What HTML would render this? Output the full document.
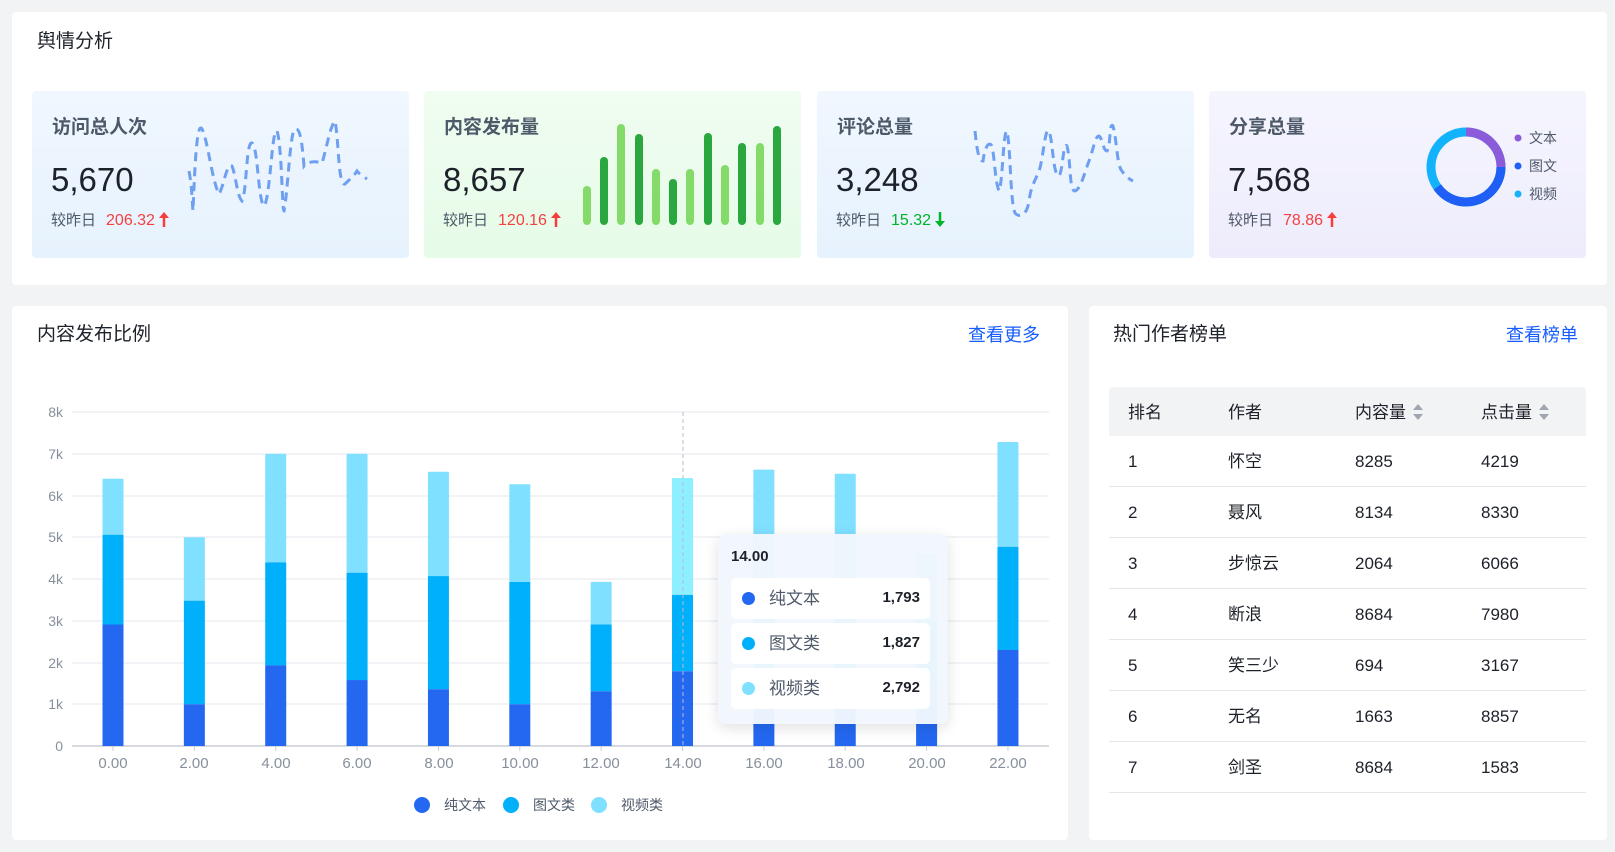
<!DOCTYPE html>
<html><head><meta charset="utf-8">
<style>
*{margin:0;padding:0;box-sizing:border-box}
body{width:1615px;height:852px;background:#f1f3f5;font-family:"Liberation Sans","Noto Sans CJK SC",sans-serif;position:relative;overflow:hidden;color:#1d2129}
.abs{position:absolute}
.panel{position:absolute;background:#fff;border-radius:4px}
.card{position:absolute;top:91px;width:377px;height:167px;border-radius:4px}
.ct{position:absolute;left:20px;top:25px;font-size:19px;line-height:24px;font-weight:bold;color:#4e5969}
.cn{position:absolute;left:19px;top:69px;font-size:33px;line-height:40px;color:#1d2129}
.cd{position:absolute;left:19px;top:120px;font-size:15px;line-height:20px;color:#4e5969;white-space:nowrap}
.cd b{font-weight:normal;margin-left:10px;font-size:16px}
.cd svg{vertical-align:-2px;margin-left:4px}
.up{color:#f53f3f}.dn{color:#00b42a}
.h{font-size:19px;line-height:24px;color:#1d2129}
.link{font-size:18px;line-height:24px;color:#165dff}
.row{position:absolute;left:1109px;width:477px;height:51px;border-bottom:1px solid #e5e6eb;font-size:17px}
.row span,.hd span{position:absolute;top:15px;line-height:22px;height:22px}
.tt span{line-height:22px}
</style></head><body>

<div class="panel" style="left:12px;top:12px;width:1595px;height:273px"></div>
<div class="abs h" style="left:37px;top:30px">舆情分析</div>

<div class="card" style="left:32px;background:linear-gradient(#f0f7ff,#e6f2fd)">
 <div class="ct">访问总人次</div><div class="cn">5,670</div>
 <div class="cd">较昨日<b class="up">206.32</b><svg width="10" height="15"><path d="M5,15V5" stroke="#f53f3f" stroke-width="2.5"/><path d="M0,6L5,0L10,6Z" fill="#f53f3f"/></svg></div>
 <svg class="abs" style="left:0;top:0" width="377" height="167"><path d="M157,80 C160,95 160,110 161,120 C163,70 165,30 170,38 C176,50 180,90 187,103 C192,95 195,70 200,75 C204,85 205,105 210,110 C215,100 214,50 220,52 C226,55 226,110 232,115 C238,110 240,35 245,40 C250,55 250,120 252,120 C256,100 258,40 263,38 C268,36 270,50 272,75 C276,70 284,70 290,72 C294,60 298,35 303,30 C307,50 306,95 313,93 C318,88 322,85 325,80 C328,84 332,86 335,88" fill="none" stroke="#6e9ff0" stroke-width="3" stroke-dasharray="9 6"/></svg>
</div>

<div class="card" style="left:424px;background:linear-gradient(#f0fdf1,#e6fbe8)">
 <div class="ct">内容发布量</div><div class="cn">8,657</div>
 <div class="cd">较昨日<b class="up">120.16</b><svg width="10" height="15"><path d="M5,15V5" stroke="#f53f3f" stroke-width="2.5"/><path d="M0,6L5,0L10,6Z" fill="#f53f3f"/></svg></div>
 <svg class="abs" style="left:0;top:0" width="377" height="167">
 <g stroke-linecap="round" stroke-width="8">
 <line x1="163" y1="130" x2="163" y2="99" stroke="#85db6a"/>
 <line x1="180" y1="130" x2="180" y2="70" stroke="#2aa83f"/>
 <line x1="197" y1="130" x2="197" y2="37" stroke="#85db6a"/>
 <line x1="215" y1="130" x2="215" y2="47" stroke="#2aa83f"/>
 <line x1="232" y1="130" x2="232" y2="82" stroke="#85db6a"/>
 <line x1="249" y1="130" x2="249" y2="92" stroke="#2aa83f"/>
 <line x1="266" y1="130" x2="266" y2="82" stroke="#85db6a"/>
 <line x1="284" y1="130" x2="284" y2="46" stroke="#2aa83f"/>
 <line x1="301" y1="130" x2="301" y2="78" stroke="#85db6a"/>
 <line x1="318" y1="130" x2="318" y2="56" stroke="#2aa83f"/>
 <line x1="336" y1="130" x2="336" y2="56" stroke="#85db6a"/>
 <line x1="353" y1="130" x2="353" y2="39" stroke="#2aa83f"/>
 </g></svg>
</div>

<div class="card" style="left:817px;background:linear-gradient(#f0f7ff,#e6f2fd)">
 <div class="ct">评论总量</div><div class="cn">3,248</div>
 <div class="cd">较昨日<b class="dn">15.32</b><svg width="10" height="15"><path d="M5,0V10" stroke="#00b42a" stroke-width="2.5"/><path d="M0,9L5,15L10,9Z" fill="#00b42a"/></svg></div>
 <svg class="abs" style="left:0;top:0" width="377" height="167"><path d="M158,40 C160,60 162,70 166,70 C168,55 172,50 175,55 C178,70 178,90 182,100 C186,90 186,40 190,40 C194,60 193,110 198,122 C202,127 210,125 212,110 C214,95 218,90 222,80 C226,70 228,35 232,40 C236,50 236,85 242,85 C246,80 246,50 250,55 C254,70 252,100 258,100 C264,98 268,80 272,70 C276,60 278,45 282,45 C286,48 286,60 290,60 C294,55 292,30 296,35 C300,50 300,75 305,80 C308,85 312,88 316,90" fill="none" stroke="#6e9ff0" stroke-width="3" stroke-dasharray="9 6"/></svg>
</div>

<div class="card" style="left:1209px;background:linear-gradient(#f5f5fe,#eeecfc)">
 <div class="ct">分享总量</div><div class="cn">7,568</div>
 <div class="cd">较昨日<b class="up">78.86</b><svg width="10" height="15"><path d="M5,15V5" stroke="#f53f3f" stroke-width="2.5"/><path d="M0,6L5,0L10,6Z" fill="#f53f3f"/></svg></div>
 <svg class="abs" style="left:0;top:0" width="377" height="167">
 <g transform="translate(257,76)" fill="none" stroke-width="9">
 <circle r="35" stroke="#12b3fb"/>
 <path d="M0,-35 A35,35 0 0 1 35,0" stroke="#8c5bd9"/>
 <path d="M35,0 A35,35 0 0 1 -28.7,20" stroke="#1f5ff5"/>
 </g>
 <circle cx="309" cy="47" r="3.5" fill="#8c5bd9"/><circle cx="309" cy="75" r="3.5" fill="#1f5ff5"/><circle cx="309" cy="103" r="3.5" fill="#12b3fb"/>
 <text x="320" y="52" font-size="14" fill="#4e5969">文本</text>
 <text x="320" y="80" font-size="14" fill="#4e5969">图文</text>
 <text x="320" y="108" font-size="14" fill="#4e5969">视频</text>
 </svg>
</div>

<div class="panel" style="left:12px;top:306px;width:1056px;height:534px"></div>
<div class="abs h" style="left:37px;top:323px">内容发布比例</div>
<div class="abs link" style="left:968px;top:323px">查看更多</div>

<svg class="abs" style="left:0;top:0" width="1100" height="852">
<g stroke="#e9ecf0" stroke-width="1.2">
<line x1="72" x2="1049" y1="412" y2="412"/><line x1="72" x2="1049" y1="454" y2="454"/><line x1="72" x2="1049" y1="496" y2="496"/><line x1="72" x2="1049" y1="537" y2="537"/><line x1="72" x2="1049" y1="579" y2="579"/><line x1="72" x2="1049" y1="621" y2="621"/><line x1="72" x2="1049" y1="663" y2="663"/><line x1="72" x2="1049" y1="704" y2="704"/>
</g>
<line x1="72" x2="1049" y1="746" y2="746" stroke="#c9cdd4" stroke-width="1.5"/>
<g font-size="14" fill="#86909c" text-anchor="end">
<text x="63" y="417">8k</text><text x="63" y="459">7k</text><text x="63" y="501">6k</text><text x="63" y="542">5k</text><text x="63" y="584">4k</text><text x="63" y="626">3k</text><text x="63" y="668">2k</text><text x="63" y="709">1k</text><text x="63" y="751">0</text>
</g>
<g font-size="15" fill="#86909c" text-anchor="middle">
<text x="113" y="768">0.00</text><text x="194" y="768">2.00</text><text x="276" y="768">4.00</text><text x="357" y="768">6.00</text><text x="439" y="768">8.00</text><text x="520" y="768">10.00</text><text x="601" y="768">12.00</text><text x="683" y="768">14.00</text><text x="764" y="768">16.00</text><text x="846" y="768">18.00</text><text x="927" y="768">20.00</text><text x="1008" y="768">22.00</text>
</g>
<g id="bars"></g>
<line x1="683" x2="683" y1="412" y2="746" stroke="#b8bcc4" stroke-dasharray="4 3"/>
<circle cx="422" cy="805" r="8" fill="#2468f2"/><circle cx="511" cy="805" r="8" fill="#00b0fa"/><circle cx="599" cy="805" r="8" fill="#80e0ff"/>
<g font-size="14" fill="#4e5969"><text x="444" y="810">纯文本</text><text x="533" y="810">图文类</text><text x="621" y="810">视频类</text></g>
</svg>
<script>
(function(){
var d=[[6.4,5.06,2.91],[5.0,3.48,1.0],[7.0,4.4,1.93],[7.0,4.15,1.58],[6.57,4.07,1.36],[6.27,3.93,1.0],[3.93,2.91,1.31],[6.42,3.62,1.79],[6.62,3.6,1.6],[6.52,4.0,1.5],[4.6,3.0,1.5],[7.28,4.77,2.3]];
var g=document.getElementById('bars'),s='';
function y(v){return 746-41.75*v}
d.forEach(function(b,i){var cx=113+i*81.36,x=cx-10.5;
var lc=i==7?'#8ef0ff':'#80e0ff';
s+='<rect x="'+x+'" y="'+y(b[0])+'" width="21" height="'+(y(b[1])-y(b[0]))+'" fill="'+lc+'" rx="1"/>';
s+='<rect x="'+x+'" y="'+y(b[1])+'" width="21" height="'+(y(b[2])-y(b[1]))+'" fill="#00b0fa"/>';
s+='<rect x="'+x+'" y="'+y(b[2])+'" width="21" height="'+(746-y(b[2]))+'" fill="#2468f2"/>';
s+='<line x1="'+cx+'" x2="'+cx+'" y1="746" y2="751" stroke="#c9cdd4"/>';});
g.innerHTML=s;})();
</script>

<div class="abs tt" style="left:718px;top:534px;width:230px;height:190px;border-radius:8px;background:rgba(241,247,253,0.97);box-shadow:0 4px 14px rgba(0,0,0,0.12)">
 <div class="abs" style="left:13px;top:12px;font-size:15px;line-height:22px;font-weight:bold;color:#1d2129">14.00</div>
 <div class="abs" style="left:13px;top:44px;width:199px;height:41px;background:#fff;border-radius:5px"><span class="abs" style="left:11px;top:14px;width:13px;height:13px;border-radius:50%;background:#2468f2"></span><span class="abs" style="left:38px;top:10px;font-size:17px;color:#4e5969">纯文本</span><span class="abs" style="right:10px;top:9px;font-size:15px;font-weight:bold">1,793</span></div>
 <div class="abs" style="left:13px;top:89px;width:199px;height:41px;background:#fff;border-radius:5px"><span class="abs" style="left:11px;top:14px;width:13px;height:13px;border-radius:50%;background:#00b0fa"></span><span class="abs" style="left:38px;top:10px;font-size:17px;color:#4e5969">图文类</span><span class="abs" style="right:10px;top:9px;font-size:15px;font-weight:bold">1,827</span></div>
 <div class="abs" style="left:13px;top:134px;width:199px;height:41px;background:#fff;border-radius:5px"><span class="abs" style="left:11px;top:14px;width:13px;height:13px;border-radius:50%;background:#80e0ff"></span><span class="abs" style="left:38px;top:10px;font-size:17px;color:#4e5969">视频类</span><span class="abs" style="right:10px;top:9px;font-size:15px;font-weight:bold">2,792</span></div>
</div>

<div class="panel" style="left:1089px;top:306px;width:518px;height:534px"></div>
<div class="abs h" style="left:1113px;top:323px">热门作者榜单</div>
<div class="abs link" style="left:1506px;top:323px">查看榜单</div>

<div class="abs hd" style="left:1109px;top:387px;width:477px;height:49px;background:#f2f3f5;border-radius:4px 4px 0 0;font-size:17px;color:#1d2129">
 <span style="left:19px">排名</span>
 <span style="left:119px">作者</span>
 <span style="left:246px">内容量</span>
 <svg class="abs" style="left:303px;top:16px" width="12" height="18"><path d="M1,7L6,1L11,7Z M1,11L6,17L11,11Z" fill="#a0a6b0"/></svg>
 <span style="left:372px">点击量</span>
 <svg class="abs" style="left:429px;top:16px" width="12" height="18"><path d="M1,7L6,1L11,7Z M1,11L6,17L11,11Z" fill="#a0a6b0"/></svg>
</div>
<div class="row" style="top:436px"><span style="left:19px">1</span><span style="left:119px">怀空</span><span style="left:246px">8285</span><span style="left:372px">4219</span></div>
<div class="row" style="top:487px"><span style="left:19px">2</span><span style="left:119px">聂风</span><span style="left:246px">8134</span><span style="left:372px">8330</span></div>
<div class="row" style="top:538px"><span style="left:19px">3</span><span style="left:119px">步惊云</span><span style="left:246px">2064</span><span style="left:372px">6066</span></div>
<div class="row" style="top:589px"><span style="left:19px">4</span><span style="left:119px">断浪</span><span style="left:246px">8684</span><span style="left:372px">7980</span></div>
<div class="row" style="top:640px"><span style="left:19px">5</span><span style="left:119px">笑三少</span><span style="left:246px">694</span><span style="left:372px">3167</span></div>
<div class="row" style="top:691px"><span style="left:19px">6</span><span style="left:119px">无名</span><span style="left:246px">1663</span><span style="left:372px">8857</span></div>
<div class="row" style="top:742px"><span style="left:19px">7</span><span style="left:119px">剑圣</span><span style="left:246px">8684</span><span style="left:372px">1583</span></div>
</body></html>
